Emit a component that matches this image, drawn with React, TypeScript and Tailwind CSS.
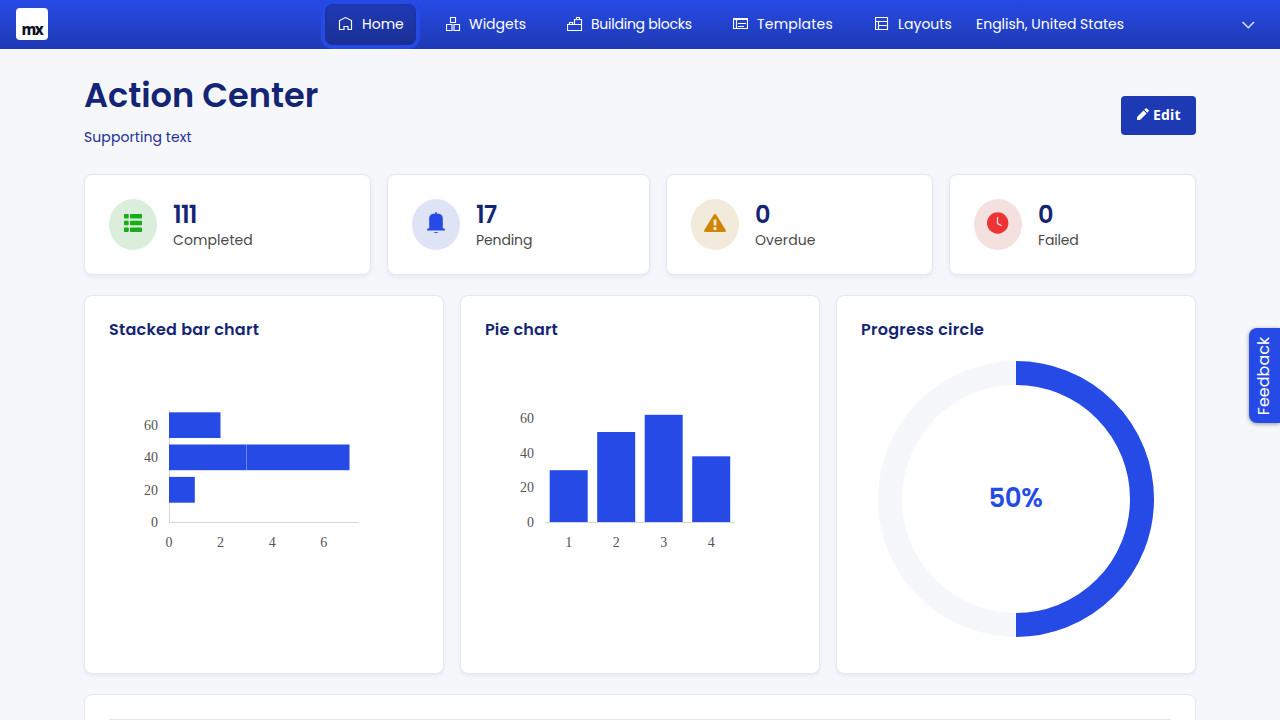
import type { ReactNode } from "react";

function Svg({ w, h, vb, className = "", children }: { w: number; h: number; vb: string; className?: string; children: ReactNode }) {
  return (
    <svg width={w} height={h} viewBox={vb} className={`shrink-0 ${className}`} aria-hidden="true">
      {children}
    </svg>
  );
}

const line = { fill: "none", stroke: "currentColor", strokeWidth: 1.15 };

function NavItem({ label, width, icon, active, track = "" }: { label: string; width: string; icon: ReactNode; active?: boolean; track?: string }) {
  return (
    <a
      className={`flex h-[41px] items-center rounded-lg pl-[13px] whitespace-nowrap ${width} ${
        active ? "bg-linear-to-b from-[#1f3ab5] to-[#1a3096] shadow-[0_0_0_4px_#264ae5,inset_0_0_3px_#1a3096]" : ""
      }`}
    >
      <span className="flex h-[15px] w-[24px] items-start">{icon}</span>
      <span className={track}>{label}</span>
    </a>
  );
}

function Stat({ width, tint, icon, value, label, track, valueTrack = "" }: { width: string; tint: string; icon: ReactNode; value: string; label: string; track: string; valueTrack?: string }) {
  return (
    <section className={`flex h-[101px] items-center rounded-lg border border-[#e4e6f2] bg-white pl-6 shadow-[0_2px_4px_rgba(38,74,229,0.08)] ${width}`}>
      <div className={`flex h-[51px] w-12 items-center justify-center rounded-[50%] pb-[3px] ${tint}`}>{icon}</div>
      <div className="ml-4 whitespace-nowrap">
        <div className={`h-[28px] text-[24px] leading-[30px] font-semibold text-[#142574] ${valueTrack}`}>{value}</div>
        <div className={`h-[22px] text-[14px] leading-[24px] text-[#4a4a4a] ${track}`}>{label}</div>
      </div>
    </section>
  );
}

function Panel({ title, track, children }: { title: string; track: string; children: ReactNode }) {
  return (
    <section className="flex h-[379px] flex-col rounded-lg border border-[#e4e6f2] bg-white px-6 pt-[22px] shadow-[0_2px_4px_rgba(38,74,229,0.08)]">
      <h2 className={`h-[43px] text-[16px] leading-[24px] font-semibold whitespace-nowrap text-[#142574] ${track}`}>{title}</h2>
      {children}
    </section>
  );
}

const axisText = { fontFamily: "Liberation Serif, serif", fontSize: 14, fill: "#555555" };

function StackedBars() {
  return (
    <Svg w={310} h={240} vb="109 361 310 240">
      <path d="M169.5 410V522.5H359" fill="none" stroke="#d5d5d5" />
      <g fill="#264ae5">
        <rect x="169" y="412.3" width="51.5" height="25.7" />
        <rect x="169" y="444.5" width="77.6" height="25.7" />
        <rect x="246.8" y="444.5" width="102.7" height="25.7" />
        <rect x="169" y="476.9" width="25.8" height="25.8" />
      </g>
      <g {...axisText} textAnchor="end">
        <text x="158" y="430">60</text>
        <text x="158" y="462">40</text>
        <text x="158" y="495">20</text>
        <text x="158" y="527">0</text>
      </g>
      <g {...axisText} textAnchor="middle">
        <text x="169" y="547">0</text>
        <text x="220.5" y="547">2</text>
        <text x="272.2" y="547">4</text>
        <text x="323.7" y="547">6</text>
      </g>
    </Svg>
  );
}

function Columns() {
  return (
    <Svg w={310} h={240} vb="485 361 310 240">
      <path d="M545 522.5H735" stroke="#d5d5d5" />
      <g fill="#264ae5">
        <rect x="549.7" y="470.2" width="38" height="51.8" />
        <rect x="597.2" y="432" width="38" height="90" />
        <rect x="644.7" y="414.8" width="38" height="107.2" />
        <rect x="692.2" y="456.3" width="38" height="65.7" />
      </g>
      <g {...axisText} textAnchor="end">
        <text x="534" y="423">60</text>
        <text x="534" y="458">40</text>
        <text x="534" y="492">20</text>
        <text x="534" y="527">0</text>
      </g>
      <g {...axisText} textAnchor="middle">
        <text x="568.7" y="547">1</text>
        <text x="616.2" y="547">2</text>
        <text x="663.7" y="547">3</text>
        <text x="711.2" y="547">4</text>
      </g>
    </Svg>
  );
}

export default function App() {
  return (
    <div className="h-[720px] w-[1280px] overflow-hidden bg-[#f6f7fb] font-['Poppins','Open_Sans',sans-serif] text-[14px]">
      <header className="flex h-[49px] items-center bg-linear-to-b from-[#264ae5] to-[#1f3ab5] text-white">
        <div className="ml-4 flex h-[33px] w-[309px]">
          <div className="flex h-8 w-8 justify-center rounded-[4px] bg-white pt-[12px] font-['Noto_Sans',sans-serif] text-[15px] leading-[18px] font-extrabold tracking-[-1.5px] text-[#0a1325]">mx</div>
        </div>
        <nav className="flex">
          <NavItem active label="Home" width="w-[91px]" icon={<Svg w={15} h={14} vb="0 0 15 14"><path {...line} d="M1.500 12.500V3.500L7.500.600 13.500 3.500v9h-3.500V9.500H6v3z" /></Svg>} />
          <NavItem label="Widgets" width="ml-[16px] w-[105px]" icon={<Svg w={15} h={15} vb="0 0 15 15" className="ml-px"><path {...line} d="M4.500.500h5v5h-5zM.500 7.500h5.500v6H.500zM8 7.500h5.500v6H8z" /></Svg>} />
          <NavItem label="Building blocks" track="tracking-[-0.24px]" width="ml-[17px] w-[150px]" icon={<Svg w={16} h={15} vb="0 0 16 15"><path {...line} d="M.500 13.500v-6h7v-5h7v11zM7.500 7.500h7M2.500 7.500v-2h3v2M9.500 2.500v-2h3v2" /></Svg>} />
          <NavItem label="Templates" track="tracking-[0.2px]" width="ml-[16px] w-[125px]" icon={<Svg w={15} h={13} vb="0 0 15 13" className="mt-px"><path {...line} d="M.500.500h14v10H.500zM.500 1.500h14M3.500 2v8.500M5 5.500h8M5 8.500h6" /></Svg>} />
          <NavItem label="Layouts" width="ml-[16px] w-[101px]" icon={<Svg w={14} h={14} vb="0 0 14 14" className="ml-px"><path {...line} d="M.500.500h12v12H.500zM.500 4.500h12M3.500 4.500v8M3.500 8.500h9" /></Svg>} />
        </nav>
        <span className="ml-[14px] w-[266px] whitespace-nowrap">English, United States</span>
        <Svg w={13} h={8} vb="0 0 13 8" className="mt-px"><path d="M.6 1L6.300 6.700 12 1" fill="none" stroke="#e0e5fa" strokeWidth="1.500" /></Svg>
      </header>
      <main className="ml-[84px] w-[1112px]">
        <div className="flex h-[125px] items-start justify-between whitespace-nowrap">
          <div className="pt-[24px]">
            <h1 className="h-[52px] text-[33.6px] leading-[45px] font-semibold text-[#142574]">Action Center</h1>
            <p className="h-[24px] leading-[24px] tracking-[0.08px] text-[#1a3096]">Supporting text</p>
          </div>
          <button className="mt-[47px] flex h-[39px] w-[75px] items-center rounded-[4px] bg-[#1e39b4] pl-4 font-['Open_Sans',sans-serif] font-bold tracking-[0.2px] text-white">
            <Svg w={12} h={12} vb="0 0 12 12" className="mb-[3px]"><path fill="currentColor" d="M0 9L6.600 2.400l3 3L3 12H0zM7.300 1.700L8.500.500q.700-.700 1.400 0l1.600 1.600q.700.700 0 1.400L10.300 4.700z" /></Svg>
            <span className="mb-[2px] ml-1">Edit</span>
          </button>
        </div>
        <div className="flex gap-4">
          <Stat width="w-[287px]" tint="bg-[#dbeedb] text-[#18ad18]" value="111" valueTrack="tracking-[-0.8px]" label="Completed" track="tracking-[0.1px]" icon={<Svg w={18} h={18} vb="0 0 18 18"><g fill="currentColor">{[0, 6.8, 13.5].map((y) => <g key={y}><rect y={y} width="4.700" height="4.500" rx=".7" /><rect x="6" y={y} width="12" height="4.500" rx=".7" /></g>)}</g></Svg>} />
          <Stat width="w-[263px]" tint="bg-[#dee3f6] text-[#264ae5]" value="17" valueTrack="tracking-[-0.6px]" label="Pending" track="tracking-[-0.12px]" icon={<Svg w={18} h={22} vb="0 0 18 22"><path fill="currentColor" d="M8.300 0h1.400v1.500C13.500 1.700 15.700 3 15.800 6.500v9.500L18 17.300v1.200H0v-1.200L2.200 16V6.500C2.300 3 4.500 1.700 8.300 1.500zM6.500 20h5q-2.500 2.200-5 0z" /></Svg>} />
          <Stat width="w-[267px]" tint="bg-[#f2eada] text-[#cf8500]" value="0" label="Overdue" track="tracking-[0.1px]" icon={<Svg w={22} h={18} vb="0 0 22 18"><path fill="currentColor" d="M9.800.700q1.200-1.400 2.400 0L21.700 16q.7 2-1.200 2h-19q-1.900 0-1.200-2z" /><rect x="9.600" y="5.500" width="2.800" height="6" fill="#f2eada" /><circle cx="11" cy="14.500" r="1.700" fill="#f2eada" /></Svg>} />
          <Stat width="w-[247px]" tint="bg-[#f5e0e0] text-[#ed3333]" value="0" label="Failed" track="tracking-[-0.15px]" icon={<Svg w={22} h={22} vb="0 0 22 22"><circle cx="10.700" cy="11" r="10.700" fill="currentColor" /><path d="M10.500 5v6.500l4 2.300" fill="none" stroke="#f5e0e0" strokeWidth="1.300" /></Svg>} />
        </div>
        <div className="mt-5 grid grid-cols-3 gap-4">
          <Panel title="Stacked bar chart" track="tracking-[0.24px]"><StackedBars /></Panel>
          <Panel title="Pie chart" track="tracking-[0.14px]"><Columns /></Panel>
          <Panel title="Progress circle" track="tracking-[0.26px]">
            <div className="ml-[17px] grid h-[276px] w-[276px] place-items-center">
              <Svg w={276} h={276} vb="0 0 276 276" className="col-start-1 row-start-1">
                <circle cx="138" cy="138" r="126" fill="none" stroke="#f6f7fb" strokeWidth="24" />
                <path d="M138 12a126 126 0 0 1 0 252" fill="none" stroke="#264ae5" strokeWidth="24" />
              </Svg>
              <span className="col-start-1 row-start-1 mr-px mb-[2px] text-[26px] font-semibold tracking-[-0.3px] text-[#264ae5]">50%</span>
            </div>
          </Panel>
        </div>
        <section className="mt-5 h-16 rounded-lg border border-[#e4e6f2] bg-white px-6 pt-6"><hr className="border-[#e4e6ea]" /></section>
      </main>
      <button className="absolute top-[328px] left-[1249px] flex h-[95px] w-[31px] items-center justify-center rounded-l-lg bg-[#264ae5] text-[16px] text-white shadow-[0_1px_4px_rgba(0,0,0,0.4)]">
        <span className="-rotate-90">Feedback</span>
      </button>
    </div>
  );
}
